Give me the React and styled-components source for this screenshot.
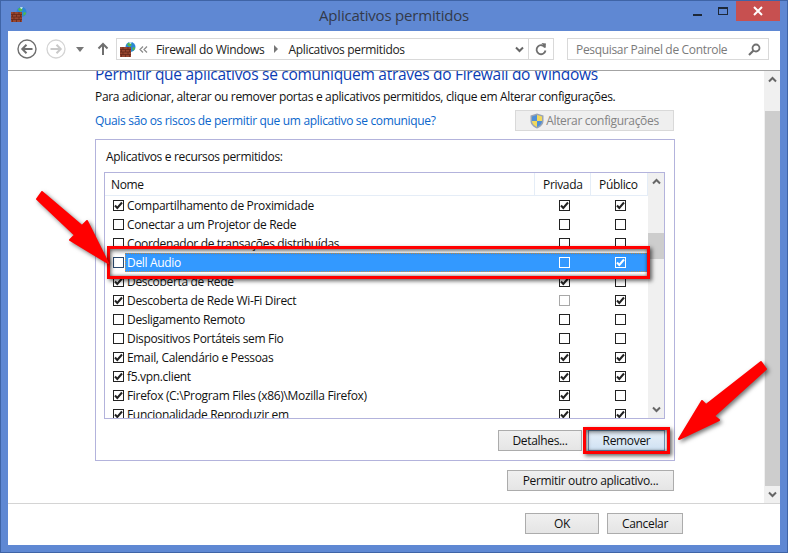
import React from 'react'
import styled, { createGlobalStyle } from 'styled-components'

const GlobalStyle = createGlobalStyle`
  html, body {
    margin: 0;
    padding: 0;
    overflow: hidden;
    background: #5f88d3;
  }
  * {
    box-sizing: border-box;
  }
`

const Window = styled.div`
  position: relative;
  width: 788px;
  height: 553px;
  display: flex;
  flex-direction: column;
  padding: 0 8px 8px;
  background: #5f88d3;
  box-shadow: inset 0 0 0 1px #3f64a6;
  font-family: "Open Sans", "Liberation Sans", sans-serif;
  font-size: 12px;
  letter-spacing: -0.33px;
  color: #111;
  overflow: hidden;
`

const TitleBar = styled.div`
  position: relative;
  height: 31px;
  flex: none;
  display: flex;
  align-items: center;
  justify-content: center;
`

const TitleIcon = styled.div`
  position: absolute;
  left: 3px;
  top: 7px;
  display: flex;
`

const TitleText = styled.div`
  font-size: 15px;
  letter-spacing: -0.2px;
  color: #333a4a;
  margin: -1px 0 0 0;
`

const WindowButtons = styled.div`
  position: absolute;
  right: 0;
  top: 1px;
  display: flex;
  align-items: flex-start;
`

const WindowButton = styled.div`
  width: ${(p) => p.$w}px;
  height: 20px;
  display: flex;
  align-items: center;
  justify-content: center;
  background: ${(p) => (p.$close ? '#c75050' : 'transparent')};
`

const MinIcon = styled.div`
  width: 9px;
  height: 2px;
  margin-top: 7px;
  background: #1d2838;
`

const MaxIcon = styled.div`
  width: 10px;
  height: 8px;
  border: 1px solid #1d2838;
  border-top-width: 2px;
`

const Client = styled.div`
  flex: 1;
  min-height: 0;
  display: flex;
  flex-direction: column;
  background: #fff;
`

const NavBar = styled.div`
  height: 40px;
  flex: none;
  display: flex;
  align-items: flex-start;
  padding: 7px 12px 0 9px;
  border-bottom: 1px solid #a3a3a3;
`

const NavIcons = styled.div`
  width: 99px;
  height: 22px;
  flex: none;
  display: flex;
  align-items: center;
`

const NavSpacer = styled.div`
  width: ${(p) => p.$w}px;
  flex: none;
`

const AddressBar = styled.div`
  width: 438px;
  height: 22px;
  flex: none;
  display: flex;
  align-items: center;
  border: 1px solid #d9d9d9;
  color: #222;
`

const AddressIcon = styled.div`
  display: flex;
  margin: 0 3px 0 3px;
`

const Crumb = styled.span`
  white-space: nowrap;
`

const CrumbSep = styled.div`
  display: flex;
  margin: 0 ${(p) => p.$gap}px;
`

const AddressEnd = styled.div`
  width: 25px;
  height: 20px;
  flex: none;
  display: flex;
  align-items: center;
  justify-content: center;
  border-left: 1px solid #d9d9d9;
`

const AddressChevron = styled.div`
  display: flex;
  margin: 0 4px 0 auto;
`

const SearchBox = styled.div`
  width: 202px;
  height: 22px;
  flex: none;
  margin-left: 13px;
  display: flex;
  align-items: center;
  justify-content: space-between;
  padding: 0 7px 0 8px;
  border: 1px solid #d9d9d9;
  color: #7a7a7a;
`

const Main = styled.div`
  flex: 1;
  min-height: 0;
  display: flex;
`

const Viewport = styled.div`
  flex: 1;
  min-width: 0;
  overflow: hidden;
  padding: 0 89px 0 87px;
`

const Heading = styled.h1`
  margin: -7px 0 0;
  height: 21px;
  font-size: 15.5px;
  font-weight: 400;
  line-height: 21px;
  letter-spacing: -0.28px;
  color: #0a3cb4;
  white-space: nowrap;
`

const Description = styled.p`
  margin: 2px 0 0;
  line-height: 20px;
  white-space: nowrap;
`

const LinkRow = styled.div`
  margin-top: 3px;
  height: 21px;
  display: flex;
  align-items: center;
  justify-content: space-between;
  padding-right: 1px;
`

const Link = styled.a`
  color: #0a66cc;
`

const Button = styled.div`
  width: ${(p) => p.$w}px;
  height: 21px;
  flex: none;
  display: flex;
  align-items: center;
  justify-content: center;
  gap: 2px;
  border: 1px solid ${(p) => (p.$disabled ? '#d9d9d9' : p.$hover ? '#6f93b8' : '#acacac')};
  color: ${(p) => (p.$disabled ? '#838383' : '#111')};
  background: ${(p) =>
    p.$disabled
      ? '#efefef'
      : p.$hover
        ? 'linear-gradient(to bottom, #e6eff8, #dce9f6 50%, #cfe1f3)'
        : 'linear-gradient(to bottom, #f0f0f0, #e5e5e5)'};
`

const GroupBox = styled.div`
  margin-top: 8px;
  height: 322px;
  border: 1px solid #b3b3dc;
  padding: 8px 9px 0 8px;
`

const GroupLabel = styled.div`
  height: 17px;
  line-height: 17px;
  margin-bottom: 7px;
  padding-left: 2px;
`

const ListBox = styled.div`
  height: 247px;
  display: flex;
  border: 1px solid #b3b3dc;
`

const ListBody = styled.div`
  flex: 1;
  min-width: 0;
  overflow: hidden;
`

const ListHeader = styled.div`
  height: 23px;
  display: grid;
  grid-template-columns: 1fr 56px 57px;
  border-bottom: 1px solid #e5edf7;
`

const HeaderCell = styled.div`
  display: flex;
  align-items: center;
  padding-left: ${(p) => p.$pad}px;
  border-right: 1px solid #e5edf7;
`

const Row = styled.div`
  position: relative;
  height: 19px;
  display: grid;
  grid-template-columns: 1fr 56px 56px;
  align-items: center;
  color: ${(p) => (p.$selected ? '#fff' : 'inherit')};
  background: ${(p) => (p.$selected ? 'linear-gradient(to right, transparent 20px, #3399ff 20px)' : 'none')};

  &::after {
    content: '';
    display: ${(p) => (p.$selected ? 'block' : 'none')};
    position: absolute;
    inset: 0 0 0 20px;
    border: 1px dotted #c8924a;
  }
`

const NameCell = styled.div`
  display: flex;
  align-items: center;
  padding-left: 8px;
  gap: 3px;
  white-space: nowrap;
`

const CheckCell = styled.div`
  display: flex;
  justify-content: center;
`

const Box = styled.div`
  width: 11px;
  height: 11px;
  flex: none;
  display: flex;
  align-items: center;
  justify-content: center;
  border: 1px solid ${(p) => p.$color};
  background: ${(p) => (p.$selected ? 'transparent' : '#fff')};
`

const ScrollBar = styled.div`
  width: ${(p) => p.$w}px;
  flex: none;
  display: flex;
  flex-direction: column;
  background: #f0f0f0;
`

const ScrollArrow = styled.div`
  height: 17px;
  flex: none;
  display: flex;
  align-items: center;
  justify-content: center;
`

const ScrollTrack = styled.div`
  flex: 1;
  min-height: 0;
  padding-top: ${(p) => p.$offset}px;
`

const ScrollThumb = styled.div`
  height: ${(p) => p.$h}px;
  margin-left: ${(p) => p.$inset}px;
  background: #cdcdcd;
`

const ButtonRow = styled.div`
  display: flex;
  justify-content: flex-end;
  gap: 6px;
  margin-top: ${(p) => p.$top}px;
  padding-right: ${(p) => p.$right}px;
`

const Footer = styled.div`
  height: 42px;
  flex: none;
  display: flex;
  justify-content: flex-end;
  gap: 8px;
  padding: 9px 97px 0 0;
  border-top: 1px solid #d4d4d4;
`

const RedFrame = styled.div`
  position: absolute;
  left: ${(p) => p.$x}px;
  top: ${(p) => p.$y}px;
  width: ${(p) => p.$w}px;
  height: ${(p) => p.$h}px;
  border: 3px solid #f00;
  box-shadow: 2px 2px 4px rgba(0, 0, 0, 0.6), inset 1px 2px 4px rgba(0, 0, 0, 0.55), inset 0 -1px 3px rgba(0, 0, 0, 0.3);
  pointer-events: none;
`

const Arrow = styled.svg`
  position: absolute;
  left: 0;
  top: 0;
  filter: drop-shadow(2px 2px 2px rgba(0, 0, 0, 0.55));
  pointer-events: none;
`

const rows = [
  { name: 'Compartilhamento de Proximidade', on: true, priv: true, pub: true },
  { name: 'Conectar a um Projetor de Rede' },
  { name: 'Coordenador de transações distribuídas' },
  { name: 'Dell Audio', pub: true, selected: true },
  { name: 'Descoberta de Rede', on: true, priv: true },
  { name: 'Descoberta de Rede Wi-Fi Direct', on: true, privDisabled: true, pub: true },
  { name: 'Desligamento Remoto' },
  { name: 'Dispositivos Portáteis sem Fio' },
  { name: 'Email, Calendário e Pessoas', on: true, priv: true, pub: true },
  { name: 'f5.vpn.client', on: true, priv: true, pub: true },
  { name: 'Firefox (C:\\Program Files (x86)\\Mozilla Firefox)', on: true, priv: true },
  { name: 'Funcionalidade Reproduzir em', on: true, priv: true, pub: true },
]

const FirewallIcon = () => (
  <svg width="16" height="15" viewBox="0 0 16 15">
    <circle cx="10.500" cy="5" r="5" fill="#2b86d6" />
    <path d="M7.500 1.500c2-1.200 4-.6 4 1s-2 2.500-3 1.500-1.800-1.500-1-2.500zM12.500 5.500c1.500-.5 3 0 2.500 1.500L12.500 9z" fill="#54b948" />
    <path d="M9 .6c1-.4 2.200-.3 3 .2L10.200 2z" fill="#e8f6ff" />
    <rect x="0" y="5" width="11" height="10" fill="#97452f" />
    <path d="M0 7.500h11M0 10h11M0 12.500h11M3 5v2.500M8 5v2.500M1.500 7.500V10M5.500 7.500V10M9.500 7.500V10M3 10v2.500M8 10v2.500M1.500 12.500V15M5.500 12.500V15M9.500 12.500V15" stroke="#5e2418" strokeWidth="0.700" fill="none" />
  </svg>
)

const ShieldIcon = () => (
  <svg width="14" height="16" viewBox="0 0 14 16">
    <path d="M7 .5 13.500 2.500V8c0 3.500-3 6-6.500 7.500C3.500 14 .5 11.500.5 8V2.500z" fill="#9aa4b4" />
    <path d="M7 2 7 8H2V3.500zM7 8h5c0 2.500-2 4.500-5 6z" fill="#4f8fd6" />
    <path d="M7 2 12 3.500V8H7zM7 8v6c-3-1.500-5-3.500-5-6z" fill="#f2d95c" />
  </svg>
)

const Check = ({ color }) => (
  <svg width="9" height="9" viewBox="0 0 9 9">
    <path d="M1 4.500 3.300 7 8 1.500" fill="none" stroke={color} strokeWidth="2" />
  </svg>
)

const CheckBox = ({ checked, disabled, selected, dim }) => {
  let color = '#222'
  if (disabled) color = '#a8a8a8'
  if (selected) color = '#fff'
  if (dim) color = '#2c4a6e'
  return (
    <Box $color={color} $selected={selected}>
      {checked && <Check color={selected ? '#fff' : '#222'} />}
    </Box>
  )
}

const Chevron = ({ up, color = '#666' }) => (
  <svg width="9" height="7" viewBox="0 0 9 7">
    <path d={up ? 'M1 5.500 4.500 2 8 5.500' : 'M1 1.500 4.500 5 8 1.500'} fill="none" stroke={color} strokeWidth="2" />
  </svg>
)

const NavCircle = ({ dir, color, ring, sw }) => (
  <svg width="20" height="20" viewBox="0 0 20 20" style={{ flex: 'none' }}>
    <circle cx="10" cy="10" r="9" fill="#fff" stroke={ring} strokeWidth={sw} />
    <path
      d={dir === 'left' ? 'M15.500 10H5.500M9.500 5.800 5.300 10l4.200 4.200' : 'M4.500 10h10M10.500 5.800 14.700 10l-4.200 4.200'}
      fill="none"
      stroke={color}
      strokeWidth="2"
    />
  </svg>
)

const App = () => (
  <Window>
    <GlobalStyle />
    <TitleBar>
      <TitleIcon>
        <FirewallIcon />
      </TitleIcon>
      <TitleText>Aplicativos permitidos</TitleText>
      <WindowButtons>
        <WindowButton $w={26}>
          <MinIcon />
        </WindowButton>
        <WindowButton $w={26}>
          <MaxIcon />
        </WindowButton>
        <WindowButton $w={44} $close>
          <svg width="10" height="10" viewBox="0 0 10 10">
            <path d="M1 1 9 9M9 1 1 9" stroke="#fff" strokeWidth="2" />
          </svg>
        </WindowButton>
      </WindowButtons>
    </TitleBar>
    <Client>
      <NavBar>
        <NavIcons>
          <NavCircle dir="left" color="#6f6f6f" ring="#6f6f6f" sw="1.400" />
          <NavSpacer $w={9} />
          <NavCircle dir="right" color="#c9c9c9" ring="#d4d4d4" sw="1.300" />
          <NavSpacer $w={10} />
          <svg width="8" height="5" viewBox="0 0 8 5">
            <path d="M0 0h8L4 5z" fill="#777" />
          </svg>
          <NavSpacer $w={13} />
          <svg width="12" height="14" viewBox="0 0 12 14">
            <path d="M6 13V2M1.500 6.500 6 2l4.500 4.500" fill="none" stroke="#6f6f6f" strokeWidth="2" />
          </svg>
        </NavIcons>
        <AddressBar>
          <AddressIcon>
            <FirewallIcon />
          </AddressIcon>
          <svg width="9" height="7" viewBox="0 0 9 7">
            <path d="M4 .5 1 3.500 4 6.500M8 .5 5 3.500 8 6.500" fill="none" stroke="#8a8a8a" strokeWidth="1.200" />
          </svg>
          <CrumbSep $gap={4} />
          <Crumb>Firewall do Windows</Crumb>
          <CrumbSep $gap={10}>
            <svg width="4" height="8" viewBox="0 0 4 8">
              <path d="M0 0l4 4-4 4z" fill="#777" />
            </svg>
          </CrumbSep>
          <Crumb>Aplicativos permitidos</Crumb>
          <AddressChevron>
            <Chevron />
          </AddressChevron>
          <AddressEnd>
            <svg width="12" height="13" viewBox="0 0 12 13">
              <path d="M10 4.500A4.500 4.500 0 1 0 10.500 7.500" fill="none" stroke="#6f6f6f" strokeWidth="1.800" />
              <path d="M6.500 0 11 .5 10.500 5z" fill="#6f6f6f" />
            </svg>
          </AddressEnd>
        </AddressBar>
        <SearchBox>
          <span>Pesquisar Painel de Controle</span>
          <svg width="13" height="13" viewBox="0 0 13 13">
            <circle cx="8" cy="5" r="3.500" fill="none" stroke="#6f6f6f" strokeWidth="1.800" />
            <path d="M5.500 7.500 1 12" stroke="#6f6f6f" strokeWidth="2.200" />
          </svg>
        </SearchBox>
      </NavBar>
      <Main>
        <Viewport>
          <Heading>Permitir que aplicativos se comuniquem através do Firewall do Windows</Heading>
          <Description>Para adicionar, alterar ou remover portas e aplicativos permitidos, clique em Alterar configurações.</Description>
          <LinkRow>
            <Link>Quais são os riscos de permitir que um aplicativo se comunique?</Link>
            <Button $w={159} $disabled>
              <ShieldIcon />
              Alterar configurações
            </Button>
          </LinkRow>
          <GroupBox>
            <GroupLabel>Aplicativos e recursos permitidos:</GroupLabel>
            <ListBox>
              <ListBody>
                <ListHeader>
                  <HeaderCell $pad={6}>Nome</HeaderCell>
                  <HeaderCell $pad={8}>Privada</HeaderCell>
                  <HeaderCell $pad={8}>Público</HeaderCell>
                </ListHeader>
                {rows.map((row) => (
                  <Row key={row.name} $selected={row.selected}>
                    <NameCell>
                      <CheckBox checked={row.on} dim={row.selected} />
                      {row.name}
                    </NameCell>
                    <CheckCell>
                      <CheckBox checked={row.priv} disabled={row.privDisabled} selected={row.selected} />
                    </CheckCell>
                    <CheckCell>
                      <CheckBox checked={row.pub} selected={row.selected} />
                    </CheckCell>
                  </Row>
                ))}
              </ListBody>
              <ScrollBar $w={16}>
                <ScrollArrow>
                  <Chevron up />
                </ScrollArrow>
                <ScrollTrack $offset={43}>
                  <ScrollThumb $h={26} $inset={0} />
                </ScrollTrack>
                <ScrollArrow>
                  <Chevron />
                </ScrollArrow>
              </ScrollBar>
            </ListBox>
            <ButtonRow $top={11} $right={0}>
              <Button $w={84}>Detalhes...</Button>
              <Button $w={77} $hover>Remover</Button>
            </ButtonRow>
          </GroupBox>
          <ButtonRow $top={9} $right={1}>
            <Button $w={167}>Permitir outro aplicativo...</Button>
          </ButtonRow>
        </Viewport>
        <ScrollBar $w={16}>
          <ScrollArrow>
            <Chevron up />
          </ScrollArrow>
          <ScrollTrack $offset={23}>
            <ScrollThumb $h={375} $inset={1} />
          </ScrollTrack>
          <ScrollArrow>
            <Chevron />
          </ScrollArrow>
        </ScrollBar>
      </Main>
      <Footer>
        <Button $w={74}>OK</Button>
        <Button $w={76}>Cancelar</Button>
      </Footer>
    </Client>
    <RedFrame $x={107} $y={246} $w={543} $h={33} />
    <RedFrame $x={583} $y={427} $w={87} $h={27} />
    <Arrow width="788" height="553" viewBox="0 0 788 553">
      <path d="M42 192 82 226 87 221 108 263 70 240 75 235 37 199z" fill="#f00" stroke="#f00" strokeWidth="2" strokeLinejoin="round" />
      <path d="M761 362 706 405 702 401 679 439 719 420 714 416 766 369z" fill="#f00" stroke="#f00" strokeWidth="2" strokeLinejoin="round" />
    </Arrow>
  </Window>
)

export default App
